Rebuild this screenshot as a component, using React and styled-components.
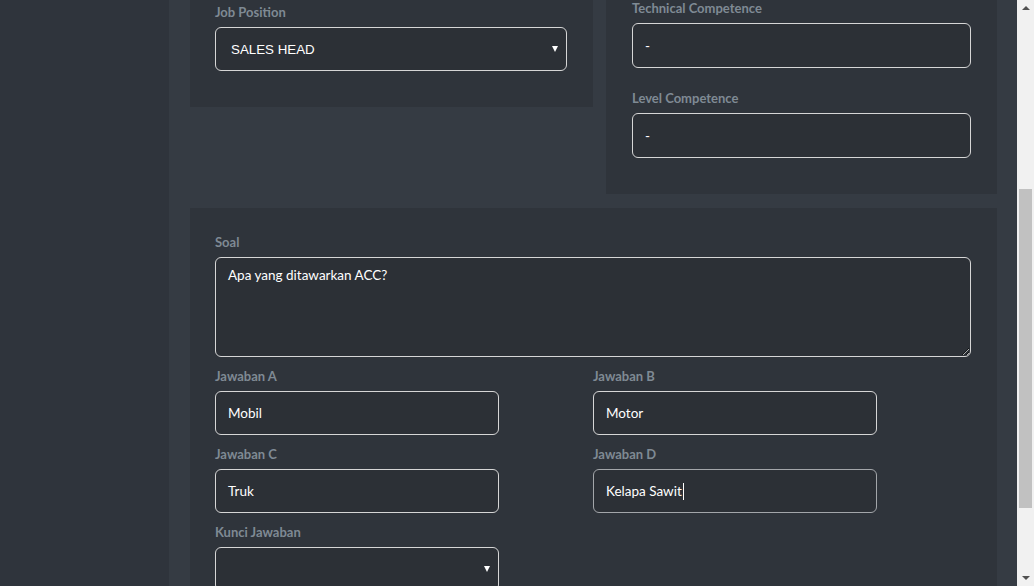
import React from "react";
import styled, { createGlobalStyle } from "styled-components";

const GlobalStyle = createGlobalStyle`
  html, body {
    margin: 0;
    padding: 0;
    height: 100%;
    overflow: hidden;
    background: #353b43;
  }
  * {
    box-sizing: border-box;
  }
`;

const Screen = styled.div`
  display: flex;
  width: 100vw;
  height: 100vh;
  overflow: hidden;
  font-family: Lato, "Open Sans", sans-serif;
`;

const Sidebar = styled.aside`
  flex: 0 0 169px;
  background: #2f343c;
`;

const Main = styled.main`
  flex: 1;
  background: #353b43;
  padding: 0 20px 0 21px;
  overflow: hidden;
`;

const Content = styled.div`
  margin-top: -26px;
  display: flex;
  flex-direction: column;
  gap: 14px;
`;

const TopRow = styled.div`
  display: grid;
  grid-template-columns: 403px 391px;
  column-gap: 13px;
  align-items: start;
`;

const Card = styled.section`
  background: #2f343b;
  padding: ${(p) => p.$top || 24}px 26px ${(p) => p.$bottom || 16}px
    ${(p) => p.$left || 25}px;
`;

const Group = styled.div`
  display: flex;
  flex-direction: column;
  margin-bottom: ${(p) => (p.$gap !== undefined ? p.$gap : 20)}px;
`;

const Label = styled.label`
  font-size: 13px;
  font-weight: 700;
  line-height: 20px;
  color: #7f8a94;
  margin-bottom: 5px;
`;

const Box = styled.div`
  display: flex;
  align-items: center;
  height: ${(p) => p.$h || 44}px;
  width: ${(p) => p.$w || "100%"};
  background: #2c3036;
  border: 1px solid ${(p) => (p.$dim ? "#a3a6aa" : "#d6d6d6")};
  border-radius: 6px;
  padding: 0 12px;
  color: #ffffff;
  font-size: 13.5px;
`;

const SelectBox = styled(Box)`
  justify-content: space-between;
  padding: 0 8px 0 15px;
  font-family: "Liberation Sans", Arial, sans-serif;
  font-size: 13.333px;
`;

const Arrow = styled.span`
  width: 0;
  height: 0;
  border-left: 3.5px solid transparent;
  border-right: 3.5px solid transparent;
  border-top: 6px solid #ffffff;
  margin-left: auto;
`;

const Caret = styled.span`
  display: inline-block;
  width: 1px;
  height: 17px;
  background: #ffffff;
  margin-left: 1px;
`;

const TextArea = styled.textarea`
  display: block;
  width: 100%;
  height: 100px;
  background: #2c3036;
  border: 1px solid #d6d6d6;
  border-radius: 6px;
  padding: 7px 12px;
  color: #ffffff;
  font-family: Lato, "Open Sans", sans-serif;
  font-size: 13.5px;
  line-height: 20px;
  resize: vertical;
  outline: none;
`;

const AnswerGrid = styled.div`
  display: grid;
  grid-template-columns: 1fr 1fr;
`;

const ScrollBar = styled.div`
  flex: 0 0 17px;
  background: #f1f1f1;
  display: flex;
  flex-direction: column;
  align-items: center;
`;

const ScrollArrow = styled.span`
  width: 0;
  height: 0;
  border-left: 4px solid transparent;
  border-right: 4px solid transparent;
  ${(p) =>
    p.$up
      ? "border-bottom: 4px solid #505050; margin-top: 6px;"
      : "border-top: 4px solid #505050; margin-top: auto; margin-bottom: 6px;"}
`;

const Thumb = styled.div`
  width: 13px;
  height: 319px;
  margin-top: 179px;
  background: #c1c1c1;
`;

const TextField = ({ label, value, w, h, dim, caret, gap }) => (
  <Group $gap={gap}>
    <Label>{label}</Label>
    <Box $w={w} $h={h} $dim={dim}>
      {value}
      {caret && <Caret />}
    </Box>
  </Group>
);

const SelectField = ({ label, value, w, gap }) => (
  <Group $gap={gap}>
    <Label>{label}</Label>
    <SelectBox $w={w}>
      {value}
      <Arrow />
    </SelectBox>
  </Group>
);

const answers = [
  { label: "Jawaban A", value: "Mobil" },
  { label: "Jawaban B", value: "Motor" },
  { label: "Jawaban C", value: "Truk" },
  { label: "Jawaban D", value: "Kelapa Sawit", dim: true, caret: true },
];

export default function App() {
  return (
    <>
      <GlobalStyle />
      <Screen>
        <Sidebar />
        <Main>
          <Content>
            <TopRow>
              <Card $top={28}>
                <SelectField label="Job Position" value="SALES HEAD" />
              </Card>
              <Card $left={26}>
                <TextField label="Technical Competence" value="-" h={45} />
                <TextField label="Level Competence" value="-" h={45} />
              </Card>
            </TopRow>
            <Card>
              <Group $gap={9}>
                <Label>Soal</Label>
                <TextArea readOnly value="Apa yang ditawarkan ACC?" />
              </Group>
              <AnswerGrid>
                {answers.map((a) => (
                  <TextField
                    key={a.label}
                    label={a.label}
                    value={a.value}
                    w="75%"
                    dim={a.dim}
                    caret={a.caret}
                    gap={9}
                  />
                ))}
              </AnswerGrid>
              <SelectField label="Kunci Jawaban" value="" w="37.5%" />
            </Card>
          </Content>
        </Main>
        <ScrollBar>
          <ScrollArrow $up />
          <Thumb />
          <ScrollArrow />
        </ScrollBar>
      </Screen>
    </>
  );
}
